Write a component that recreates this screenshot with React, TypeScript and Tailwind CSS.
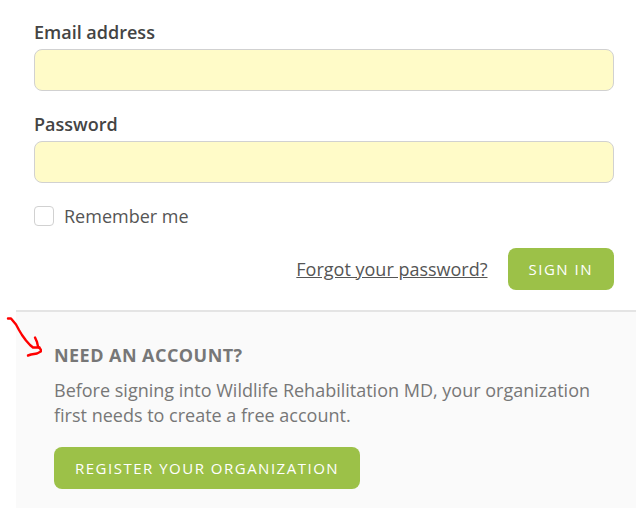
import React from 'react';

const FIELDS = [
  { id: 'email', label: 'Email address', type: 'email' },
  { id: 'password', label: 'Password', type: 'password' },
];

const BUTTON =
  'h-[42px] px-[21px] rounded-lg bg-[#9cc148] hover:bg-[#8bb038] text-white text-[15px] uppercase tracking-widest whitespace-nowrap';

const SignInForm: React.FC = () => {
  return (
    <form className="pl-[18px] pr-[22px] pt-[18px] pb-5" onSubmit={(e) => e.preventDefault()}>
      {FIELDS.map((field) => (
        <div key={field.id} className="mb-[19px]">
          <label htmlFor={field.id} className="block pb-[3px] text-lg leading-7 font-semibold text-[#444444]">
            {field.label}
          </label>
          <input
            id={field.id}
            type={field.type}
            className="block w-full h-[42px] px-3 rounded-lg border border-[#d1d1d1] bg-[#fffbc8] text-lg outline-none"
          />
        </div>
      ))}

      <div className="flex items-center gap-[10px]">
        <input
          id="remember"
          type="checkbox"
          className="appearance-none size-5 rounded border border-[#d1d1d1] bg-white checked:bg-[#9cc148]"
        />
        <label htmlFor="remember" className="text-lg leading-7 text-[#555555]">
          Remember me
        </label>
      </div>

      <div className="mt-[18px] flex items-center justify-end gap-5">
        <a href="#forgot" className="text-lg leading-7 text-[#555555] underline">
          Forgot your password?
        </a>
        <button type="submit" className={BUTTON}>
          Sign in
        </button>
      </div>
    </form>
  );
};

const Arrow: React.FC = () => {
  return (
    <svg
      className="absolute -left-[10px] top-1 w-9 h-11"
      viewBox="0 0 36 44"
      fill="none"
      stroke="#ff0000"
      strokeWidth="2.4"
      strokeLinecap="round"
      strokeLinejoin="round"
      aria-hidden="true"
    >
      <path d="M2 2.500H5L10 8.500L13 14L16 19L20 24.500L24 29L27 31.500H33.500" />
      <path d="M29 21.500L31 26L32 30.500L34.800 33.500V35.500L31 37.500L28 38L25 38.500L22 39.500" />
    </svg>
  );
};

const RegisterPanel: React.FC = () => {
  return (
    <section className="relative border-t-2 border-[#e4e4e4] bg-[#fafafa] px-[38px] pt-[29px] pb-[19px]">
      <Arrow />
      <h2 className="text-lg leading-7 font-bold uppercase tracking-wide text-[#777777]">Need an account?</h2>
      <p className="mt-[9px] mb-[19px] text-lg leading-[25px] text-[#777777]">
        Before signing into Wildlife Rehabilitation MD, your organization first needs to create a free account.
      </p>
      <button type="button" className={BUTTON}>
        Register your organization
      </button>
    </section>
  );
};

const App: React.FC = () => {
  return (
    <main className="min-h-screen bg-white pl-4 pr-2 font-['Open_Sans',sans-serif]">
      <SignInForm />
      <RegisterPanel />
    </main>
  );
};

export default App;
